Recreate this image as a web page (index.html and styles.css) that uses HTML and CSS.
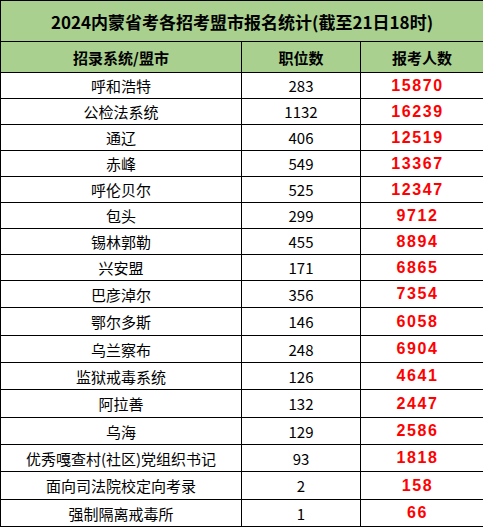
FILE: index.html
```html
<!DOCTYPE html>
<html lang="zh-CN">
<head>
<meta charset="utf-8">
<title>2024内蒙省考各招考盟市报名统计</title>
<link rel="stylesheet" href="styles.css">
</head>
<body>
<table class="stats">
  <colgroup>
    <col class="c1"><col class="c2"><col class="c3">
  </colgroup>
  <thead>
    <tr class="title-row"><th colspan="3">2024内蒙省考各招考盟市报名统计(截至21日18时)</th></tr>
    <tr class="head-row"><th>招录系统/盟市</th><th>职位数</th><th>报考人数</th></tr>
  </thead>
  <tbody>
    <tr class="r26"><td>呼和浩特</td><td>283</td><td class="num">15870</td></tr>
    <tr class="r26"><td>公检法系统</td><td>1132</td><td class="num">16239</td></tr>
    <tr class="r26"><td>通辽</td><td>406</td><td class="num">12519</td></tr>
    <tr class="r26"><td>赤峰</td><td>549</td><td class="num">13367</td></tr>
    <tr class="r26"><td>呼伦贝尔</td><td>525</td><td class="num">12347</td></tr>
    <tr class="r26"><td>包头</td><td>299</td><td class="num">9712</td></tr>
    <tr class="r26"><td>锡林郭勒</td><td>455</td><td class="num">8894</td></tr>
    <tr class="r26"><td>兴安盟</td><td>171</td><td class="num">6865</td></tr>
    <tr class="r27"><td>巴彦淖尔</td><td>356</td><td class="num">7354</td></tr>
    <tr class="r28"><td>鄂尔多斯</td><td>146</td><td class="num">6058</td></tr>
    <tr class="r27"><td>乌兰察布</td><td>248</td><td class="num">6904</td></tr>
    <tr class="r27"><td>监狱戒毒系统</td><td>126</td><td class="num">4641</td></tr>
    <tr class="r28"><td>阿拉善</td><td>132</td><td class="num">2447</td></tr>
    <tr class="r27"><td>乌海</td><td>129</td><td class="num">2586</td></tr>
    <tr class="r27"><td>优秀嘎查村(社区)党组织书记</td><td>93</td><td class="num">1818</td></tr>
    <tr class="r28"><td>面向司法院校定向考录</td><td>2</td><td class="num">158</td></tr>
    <tr class="r27"><td>强制隔离戒毒所</td><td>1</td><td class="num">66</td></tr>
  </tbody>
</table>
</body>
</html>
```

FILE: styles.css
```css
html, body {
  margin: 0;
  padding: 0;
  background: #ffffff;
}

.stats {
  border-collapse: collapse;
  width: 483px;
  table-layout: fixed;
  font-family: "Noto Sans CJK SC", "Noto Sans", sans-serif;
  color: #000;
}

.c1 { width: 241px; }
.c2 { width: 119px; }
.c3 { width: 123px; }

.stats th,
.stats td {
  border: 1px solid #000;
  padding: 0;
  text-align: center;
  vertical-align: middle;
  line-height: 1;
}

.stats th {
  background: #a9d08e;
  font-weight: 700;
}

.title-row th {
  height: 40px;
  font-size: 17px;
}

.head-row th {
  height: 30px;
  font-size: 15px;
}

.stats td {
  font-size: 15px;
  font-weight: 400;
}

.r26 td { height: 25px; }
.r27 td { height: 26px; }
.r28 td { height: 27px; }

.stats td.num {
  color: #ff0000;
  font-family: "Liberation Sans", "Noto Sans", sans-serif;
  font-weight: 700;
  font-size: 16px;
  letter-spacing: 1.6px;
  padding-right: 9px;
}
```
